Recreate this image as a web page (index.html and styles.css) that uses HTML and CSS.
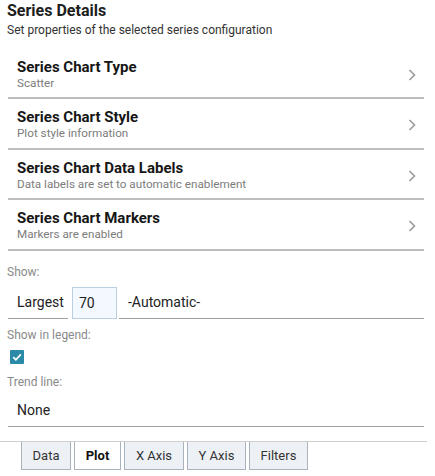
FILE: index.html
```html
<!DOCTYPE html>
<html>
<head>
<meta charset="utf-8">
<link rel="stylesheet" href="styles.css">
</head>
<body>
<div class="panel">
  <header class="head">
    <h1 class="head-title">Series Details</h1>
    <p class="head-sub">Set properties of the selected series configuration</p>
  </header>
  <div class="list">
    <div class="row">
      <div class="row-text">
        <div class="row-title">Series Chart Type</div>
        <div class="row-sub">Scatter</div>
      </div>
      <svg class="chev" width="8" height="12" viewBox="0 0 8 12"><path d="M1.5 1 L6.5 6 L1.5 11" fill="none" stroke="#9a9a9a" stroke-width="1.6"/></svg>
    </div>
    <div class="row">
      <div class="row-text">
        <div class="row-title">Series Chart Style</div>
        <div class="row-sub">Plot style information</div>
      </div>
      <svg class="chev" width="8" height="12" viewBox="0 0 8 12"><path d="M1.5 1 L6.5 6 L1.5 11" fill="none" stroke="#9a9a9a" stroke-width="1.6"/></svg>
    </div>
    <div class="row">
      <div class="row-text">
        <div class="row-title">Series Chart Data Labels</div>
        <div class="row-sub">Data labels are set to automatic enablement</div>
      </div>
      <svg class="chev" width="8" height="12" viewBox="0 0 8 12"><path d="M1.5 1 L6.5 6 L1.5 11" fill="none" stroke="#9a9a9a" stroke-width="1.6"/></svg>
    </div>
    <div class="row">
      <div class="row-text">
        <div class="row-title">Series Chart Markers</div>
        <div class="row-sub">Markers are enabled</div>
      </div>
      <svg class="chev" width="8" height="12" viewBox="0 0 8 12"><path d="M1.5 1 L6.5 6 L1.5 11" fill="none" stroke="#9a9a9a" stroke-width="1.6"/></svg>
    </div>
  </div>

  <div class="label label-show">Show:</div>
  <div class="inputs">
    <div class="sel sel-largest">Largest</div>
    <div class="num">70</div>
    <div class="sel sel-auto">-Automatic-</div>
  </div>

  <div class="label label-legend">Show in legend:</div>
  <div class="check">
    <svg width="14" height="14" viewBox="0 0 14 14"><rect width="14" height="14" rx="1" fill="#2a8aa8"/><path d="M3.2 7.2 L5.9 9.8 L10.8 4.4" fill="none" stroke="#fff" stroke-width="1.8"/></svg>
  </div>

  <div class="label label-trend">Trend line:</div>
  <div class="sel sel-none">None</div>
</div>
<nav class="tabs">
  <div class="tab">Data</div>
  <div class="tab tab-active">Plot</div>
  <div class="tab">X Axis</div>
  <div class="tab">Y Axis</div>
  <div class="tab">Filters</div>
</nav>
</body>
</html>
```

FILE: styles.css
```css
html, body {
  margin: 0;
  padding: 0;
  background: #fff;
  font-family: Roboto, "Liberation Sans", Arial, sans-serif;
  color: #222;
}

.panel {
  padding: 0 11px 0 8px;
}

.head {
  margin-left: -1px;
}

.head-title {
  margin: 1px 0 0 0;
  font-size: 16px;
  line-height: 20px;
  font-weight: 700;
  color: #1e1e1e;
}

.head-sub {
  margin: 2px 0 0 0;
  font-size: 12px;
  line-height: 14px;
  color: #333;
}

.list {
  margin-top: 12px;
}

.row {
  display: flex;
  align-items: center;
  justify-content: space-between;
  padding: 9px 9px 7.4px 9px;
  border-bottom: 2px solid #bdbdbd;
}

.row-title {
  font-size: 15px;
  line-height: 18px;
  font-weight: 700;
  color: #161616;
}

.row-sub {
  font-size: 11.7px;
  line-height: 14px;
  color: #7c7c7c;
}

.chev {
  margin-right: -1px;
  margin-top: 2px;
}

.label {
  font-size: 12px;
  line-height: 14px;
  color: #8a8a8a;
  margin-left: -1px;
}

.label-show {
  margin-top: 14px;
}

.inputs {
  display: flex;
  align-items: stretch;
  margin-top: 8px;
  height: 32px;
}

.sel {
  font-size: 14px;
  color: #222;
  display: flex;
  align-items: center;
  padding-left: 9px;
  border-bottom: 1px solid #a0a0a0;
  box-sizing: border-box;
}

.sel-largest {
  width: 60px;
}

.num {
  width: 45px;
  box-sizing: border-box;
  margin-left: 4px;
  border: 1px solid #bccfe2;
  background: #f4f9ff;
  font-size: 14px;
  color: #222;
  display: flex;
  align-items: center;
  padding-left: 6px;
  height: 32px;
}

.sel-auto {
  flex: 1;
  margin-left: 2px;
}

.label-legend {
  margin-top: 9px;
}

.check {
  margin-top: 8px;
  margin-left: 2px;
  height: 14px;
}

.check svg {
  display: block;
}

.label-trend {
  margin-top: 11px;
}

.sel-none {
  margin-top: 6px;
  height: 32px;
}

.tabs {
  display: flex;
  gap: 3px;
  margin: 14px 8px 0 0;
  padding-left: 21px;
  border-top: 1px solid #cfcfcf;
}

.tab {
  height: 28px;
  box-sizing: border-box;
  border: 1px solid #a9b3bd;
  border-top: none;
  background: #edf1f6;
  font-size: 13px;
  color: #333;
  display: flex;
  align-items: center;
  justify-content: center;
  padding: 0;
  white-space: nowrap;
}

.tab:nth-child(1) { width: 50px; }
.tab:nth-child(2) { width: 47px; }
.tab:nth-child(3) { width: 60px; }
.tab:nth-child(4) { width: 59px; }
.tab:nth-child(5) { width: 59px; }

.tab-active {
  background: #fff;
  font-weight: 700;
  color: #111;
}
```
